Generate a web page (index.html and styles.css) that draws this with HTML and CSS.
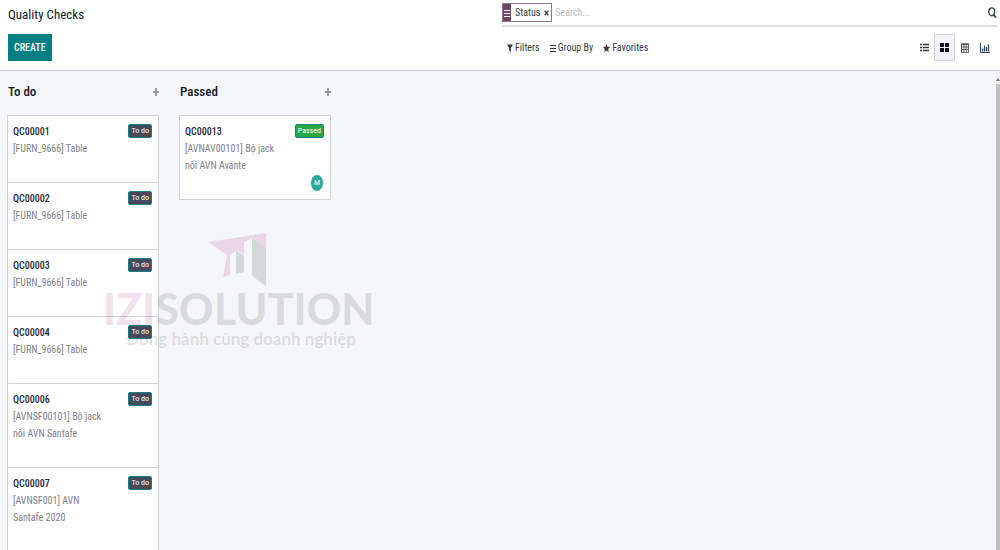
FILE: index.html
```html
<!DOCTYPE html>
<html lang="en">
<head>
<meta charset="utf-8">
<title>Quality Checks</title>
<link rel="stylesheet" href="styles.css">
</head>
<body>
<header class="panel">
  <div class="panel-left">
    <h1 class="title">Quality Checks</h1>
    <button class="create" type="button">CREATE</button>
  </div>
  <div class="panel-right">
    <div class="search">
      <div class="facet">
        <span class="facet-icon"><svg width="6" height="8" viewBox="0 0 6 8"><path d="M0 1.500h6M0 4.500h6M0 7.500h6" stroke="#fff" stroke-width="1"/></svg></span>
        <span class="facet-label">Status</span>
        <button class="facet-remove" type="button" aria-label="Remove Status"><svg width="5" height="6" viewBox="0 0 5 6"><path d="M.7.7l3.6 4.6M4.3.7L.7 5.3" stroke="#444b5a" stroke-width="1.5"/></svg></button>
      </div>
      <input class="search-input" type="text" placeholder="Search..." aria-label="Search">
      <button class="search-button" type="button" aria-label="Search"><svg width="9" height="12" viewBox="0 0 9 12"><ellipse cx="3.7" cy="4.8" rx="2.9" ry="3.9" fill="none" stroke="#374151" stroke-width="1.4"/><path d="M5.6 7.8l2.4 3" stroke="#374151" stroke-width="1.8"/></svg></button>
    </div>
    <div class="tools">
      <nav class="options">
        <button class="option" type="button"><svg width="6" height="8" viewBox="0 0 6 8"><path d="M0 .5h6L3.9 4v4L2.1 6.6V4z" fill="#30384a"/></svg>Filters</button>
        <button class="option" type="button"><svg width="6" height="8" viewBox="0 0 6 8"><path d="M0 1.500h6M0 4.500h6M0 7.500h6" stroke="#30384a"/></svg>Group By</button>
        <button class="option" type="button"><svg width="7" height="8" viewBox="0 0 7 8"><path d="M3.5 0l1 2.7L7 3 5.200 4.900l.5 3.100-2.200-1.500L1.300 8l.5-3.100L0 3l2.500-.3z" fill="#30384a"/></svg>Favorites</button>
      </nav>
      <div class="views">
        <button class="view" type="button" aria-label="List"><svg width="9" height="9" viewBox="0 0 9 9"><path d="M0 1.500h2M0 4.500h2M0 7.500h2M3 1.500h6M3 4.500h6M3 7.500h6" stroke="#30384a" stroke-width="1.500"/></svg></button>
        <button class="view active" type="button" aria-label="Kanban"><svg width="9" height="9" viewBox="0 0 9 9"><path d="M0 0h4v4H0zM5 0h4v4H5zM0 5h4v4H0zM5 5h4v4H5z" fill="#0b1020"/></svg></button>
        <button class="view" type="button" aria-label="Table"><svg width="8" height="10" viewBox="0 0 8 10"><path d="M.5 1h7v8.500h-7zM.5 4h7M.5 6.500h7M3 1v8.500M5.300 1v8.500" fill="none" stroke="#4b5365" stroke-width=".9"/><path d="M0 .5h8v1.500H0z" fill="#4b5365"/></svg></button>
        <button class="view" type="button" aria-label="Graph"><svg width="10" height="10" viewBox="0 0 10 10"><path d="M.5 0v9.500H10" fill="none" stroke="#30466a"/><path d="M2.500 8.500v-3M4.500 8.500v-6M6.500 8.500V4M8.500 8.500v-7" stroke="#30466a" stroke-width="1.300"/></svg></button>
      </div>
    </div>
  </div>
</header>
<div class="workspace">
<main class="board">
  <section class="column">
    <div class="column-head"><h2 class="column-title">To do</h2><button class="add" type="button" aria-label="Add to To do"><svg width="6" height="8" viewBox="0 0 6 8"><path d="M3 0v8M0 4h6" stroke="#959ca8" stroke-width="2"/></svg></button></div>
    <div class="cards">
      <article class="card"><div class="card-text"><h3 class="code">QC00001</h3><p class="product">[FURN_9666] Table</p></div><span class="badge">To do</span></article>
      <article class="card"><div class="card-text"><h3 class="code">QC00002</h3><p class="product">[FURN_9666] Table</p></div><span class="badge">To do</span></article>
      <article class="card"><div class="card-text"><h3 class="code">QC00003</h3><p class="product">[FURN_9666] Table</p></div><span class="badge">To do</span></article>
      <article class="card"><div class="card-text"><h3 class="code">QC00004</h3><p class="product">[FURN_9666] Table</p></div><span class="badge">To do</span></article>
      <article class="card"><div class="card-text"><h3 class="code">QC00006</h3><p class="product">[AVNSF00101] Bộ jack<br>nối AVN Santafe</p></div><span class="badge">To do</span></article>
      <article class="card"><div class="card-text"><h3 class="code">QC00007</h3><p class="product">[AVNSF001] AVN<br>Santafe 2020</p></div><span class="badge">To do</span></article>
    </div>
  </section>
  <section class="column">
    <div class="column-head"><h2 class="column-title">Passed</h2><button class="add" type="button" aria-label="Add to Passed"><svg width="6" height="8" viewBox="0 0 6 8"><path d="M3 0v8M0 4h6" stroke="#959ca8" stroke-width="2"/></svg></button></div>
    <div class="cards">
      <article class="card"><div class="card-text"><h3 class="code">QC00013</h3><p class="product">[AVNAV00101] Bộ jack<br>nối AVN Avante</p></div><div class="card-side"><span class="badge passed">Passed</span><span class="avatar">M</span></div></article>
    </div>
  </section>
</main>
<div class="scrollbar"><svg width="4" height="3" viewBox="0 0 4 3"><path d="M0 3l2-3 2 3z" fill="#777"/></svg><div class="thumb"></div></div>
</div>
<div class="watermark">
  <svg class="mark" width="60" height="54" viewBox="0 0 60 54"><path d="M0 9L58 0v14L45 5 36 9v13l-7-5-7 5v20l-7 2 4-22z" fill="#c05a9c" fill-opacity=".2"/><path d="M28 17l8 6v16l-8 2zM44 5l14 9v39l-14-10z" fill="#444" fill-opacity=".17"/></svg>
  <div class="brand"><span class="brand-izi">IZI</span>SOLUTION</div>
  <div class="slogan">Đồng hành cùng doanh nghiệp</div>
</div>
</body>
</html>
```
FILE: styles.css
```css
* { box-sizing: border-box; }
body {
  margin: 0;
  height: 100vh;
  display: flex;
  flex-direction: column;
  overflow: hidden;
  position: relative;
  background: #f5f6fa;
  color: #30384a;
  font: 10px/16px "Roboto Condensed", Roboto, sans-serif;
}
h1, h2, h3, p { margin: 0; }
svg { display: block; flex: none; }
button {
  border: 0;
  padding: 0;
  background: none;
  color: inherit;
  font: inherit;
}
.panel {
  display: grid;
  grid-template-columns: 1fr 1fr;
  background: #fff;
  border-bottom: 1px solid #cfd2da;
}
.panel-left {
  display: flex;
  flex-direction: column;
  align-items: flex-start;
  gap: 9px;
  padding: 5px 8px 9px;
}
.title { font-size: 13px; line-height: 20px; font-weight: 400; color: #111827; }
.create {
  height: 27px;
  padding: 0 6px;
  background: #008083;
  color: #fff;
  font-weight: 500;
}
.panel-right { padding: 0 3px 0 2px; }
.search {
  display: flex;
  align-items: center;
  height: 27px;
  border-bottom: 2px solid #dcdee5;
}
.facet {
  display: flex;
  align-items: stretch;
  height: 19px;
  border: 1px solid #9a6f93;
}
.facet-icon { display: flex; align-items: center; padding: 0 1px; background: #6f4566; }
.facet-label { padding: 0 4px; line-height: 17px; }
.facet-remove { padding: 0 2px 0 0; }
.search-input {
  flex: 1;
  min-width: 0;
  border: 0;
  outline: 0;
  padding: 0 3px;
  font: inherit;
  background: none;
}
.search-input::placeholder { color: #b9bbc0; opacity: 1; }
.tools { display: flex; justify-content: space-between; align-items: center; padding: 7px 2px 0 5px; }
.options { display: flex; gap: 10px; }
.option { display: flex; align-items: center; gap: 2px; }
.views { display: flex; }
.view { display: flex; align-items: center; justify-content: center; width: 20px; height: 27px; }
.view.active { width: 21px; border: 1px solid #cfd2da; background: #f3f4f9; }
.workspace { flex: 1; min-height: 0; display: flex; }
.board {
  flex: 1;
  display: flex;
  align-items: flex-start;
  gap: 20px;
  padding: 0 7px;
  overflow: hidden;
}
.column { width: 152px; flex: none; }
.column-head { display: flex; align-items: center; justify-content: space-between; height: 44px; padding: 0 0 2px 1px; }
.column-title { font-size: 13px; line-height: 16px; font-weight: 500; color: #111827; }
.cards { border: 1px solid #cfd2da; background: #fff; }
.card { display: flex; justify-content: space-between; padding: 7px 6px 25px 5px; }
.card + .card { border-top: 1px solid #cfd2da; }
.code { font-size: 10px; line-height: 17px; font-weight: 500; color: #1f2738; }
.product { font-size: 10px; line-height: 17px; color: #7c818d; white-space: nowrap; }
.badge {
  align-self: flex-start;
  margin-top: 1px;
  padding: 0 2px;
  border: 1px solid #168083;
  border-radius: 2px;
  background: #444a5c;
  color: #fff;
  font-size: 8px;
  line-height: 12px;
  font-weight: 400;
}
.badge.passed { background: #28a745; }
.card-side { display: flex; flex-direction: column; align-items: flex-end; justify-content: space-between; margin-bottom: -17px; }
.card-side .badge { align-self: flex-end; }
.avatar {
  width: 12px;
  height: 16px;
  margin-right: 1px;
  border-radius: 50%;
  background: #2caaa0;
  color: #fff;
  font-size: 8px;
  line-height: 16px;
  text-align: center;
}
.scrollbar { width: 4px; padding-top: 7px; background: #f0f0f1; display: flex; flex-direction: column; gap: 3px; }
.thumb { flex: 1; background: #c1c1c2; }
.watermark {
  position: absolute;
  left: 103px;
  top: 233px;
  pointer-events: none;
  font-family: Lato, "Open Sans", sans-serif;
  color: rgba(70, 70, 75, .16);
  white-space: nowrap;
}
.mark { margin-left: 105px; }
.brand { font-size: 43px; line-height: 44px; font-weight: 900; }
.brand-izi { color: rgba(190, 90, 155, .2); }
.slogan { padding-left: 23px; font-size: 17px; line-height: 16px; font-weight: 700; }
```
